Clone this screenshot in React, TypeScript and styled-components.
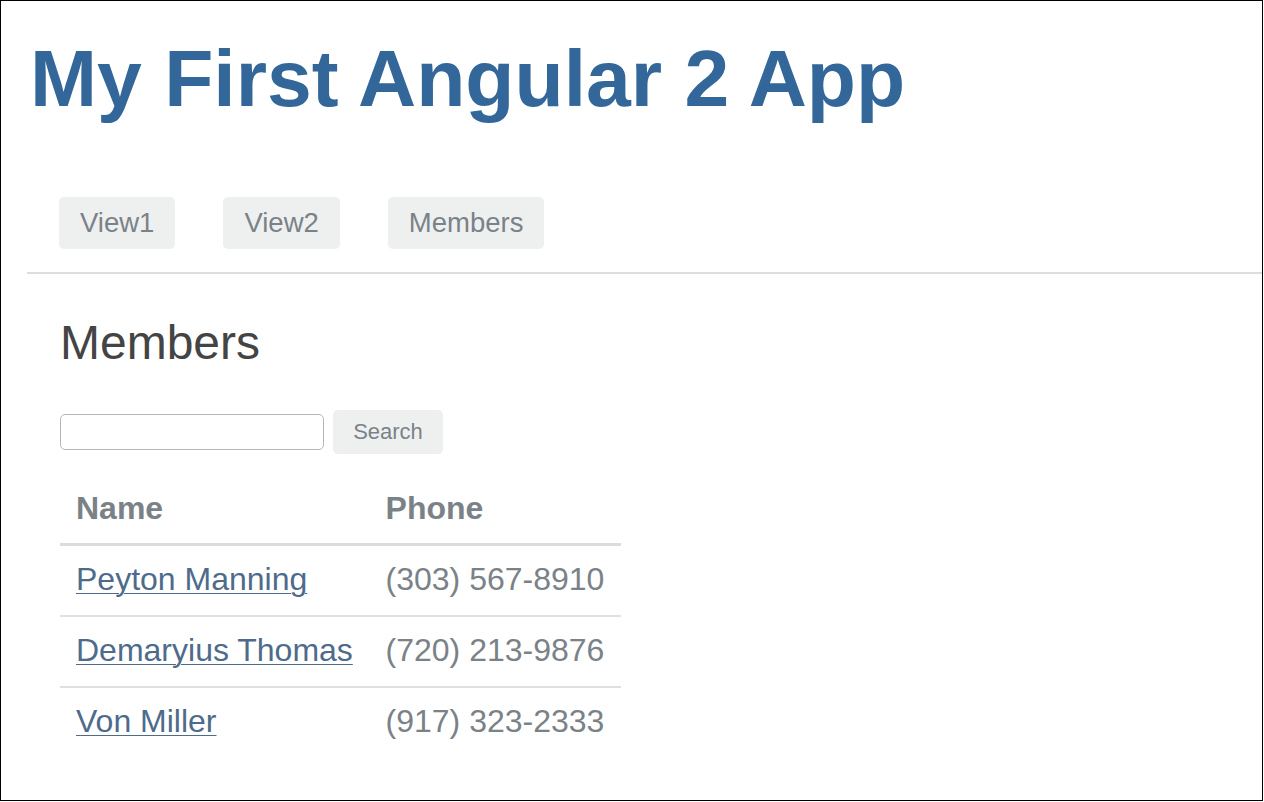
import styled, { createGlobalStyle } from "styled-components";

const GlobalStyle = createGlobalStyle`
  html, body {
    margin: 0;
    padding: 0;
    background: #ffffff;
  }
  body {
    font-family: "Liberation Sans", Arial, Helvetica, sans-serif;
  }
`;

interface Member {
  name: string;
  phone: string;
}

const members: Member[] = [
  { name: "Peyton Manning", phone: "(303) 567-8910" },
  { name: "Demaryius Thomas", phone: "(720) 213-9876" },
  { name: "Von Miller", phone: "(917) 323-2333" },
];

const Frame = styled.div`
  box-sizing: border-box;
  width: 1263px;
  height: 801px;
  border: 1px solid #000;
  padding-left: 26px;
  overflow: hidden;
  display: flex;
  flex-direction: column;
`;

const Title = styled.h1`
  margin: 37px 0 0 3px;
  font-size: 80.5px;
  line-height: 80px;
  font-weight: 700;
  color: #336699;
`;

const Nav = styled.nav`
  display: flex;
  gap: 48px;
  margin-top: 79px;
  padding: 0 0 23px 32px;
  border-bottom: 2px solid #dddddd;
`;

const NavButton = styled.a`
  display: block;
  height: 52px;
  line-height: 52px;
  padding: 0 21px;
  border-radius: 5px;
  background: #eef0f0;
  color: #7a8288;
  font-size: 27.5px;
  text-decoration: none;
  cursor: pointer;
`;

const Content = styled.section`
  padding-left: 33px;
`;

const Heading = styled.h2`
  margin: 43px 0 0;
  font-size: 48px;
  line-height: 52px;
  font-weight: 400;
  color: #444444;
`;

const SearchRow = styled.form`
  display: flex;
  align-items: center;
  gap: 9px;
  margin-top: 41px;
  height: 44px;
`;

const SearchInput = styled.input`
  box-sizing: border-box;
  width: 264px;
  height: 36px;
  border: 1px solid #b3b8bd;
  border-radius: 5px;
  padding: 0 8px;
  font-size: 18px;
  font-family: inherit;
  outline: none;
`;

const SearchButton = styled.button`
  box-sizing: border-box;
  width: 110px;
  height: 44px;
  border: none;
  border-radius: 5px;
  background: #eef0f0;
  color: #7a8288;
  font-family: inherit;
  font-size: 22px;
  cursor: pointer;
`;

const Table = styled.table`
  margin-top: 19px;
  border-collapse: collapse;
  width: 561px;
`;

const HeadCell = styled.th`
  text-align: left;
  padding: 17px 16px 17px;
  font-size: 32px;
  line-height: 36px;
  font-weight: 700;
  color: #7a8288;
  border-bottom: 3px solid #dcdce0;
`;

const Row = styled.tr<{ $last?: boolean }>`
  border-bottom: ${(p) => (p.$last ? "none" : "2px solid #e0e0e3")};
`;

const Cell = styled.td`
  padding: 15px 16px 18px;
  font-size: 32px;
  line-height: 36px;
  color: #7a8288;
  white-space: nowrap;
`;

const NameLink = styled.a`
  color: #4e6b8c;
  text-decoration: underline;
  text-underline-offset: 3px;
  text-decoration-thickness: 1px;
  cursor: pointer;
`;

export default function App() {
  return (
    <>
      <GlobalStyle />
      <Frame>
        <Title>My First Angular 2 App</Title>
        <Nav>
          <NavButton>View1</NavButton>
          <NavButton>View2</NavButton>
          <NavButton>Members</NavButton>
        </Nav>
        <Content>
          <Heading>Members</Heading>
          <SearchRow onSubmit={(e) => e.preventDefault()}>
            <SearchInput type="text" />
            <SearchButton type="submit">Search</SearchButton>
          </SearchRow>
          <Table>
            <thead>
              <tr>
                <HeadCell>Name</HeadCell>
                <HeadCell>Phone</HeadCell>
              </tr>
            </thead>
            <tbody>
              {members.map((m, i) => (
                <Row key={m.name} $last={i === members.length - 1}>
                  <Cell>
                    <NameLink>{m.name}</NameLink>
                  </Cell>
                  <Cell>{m.phone}</Cell>
                </Row>
              ))}
            </tbody>
          </Table>
        </Content>
      </Frame>
    </>
  );
}
